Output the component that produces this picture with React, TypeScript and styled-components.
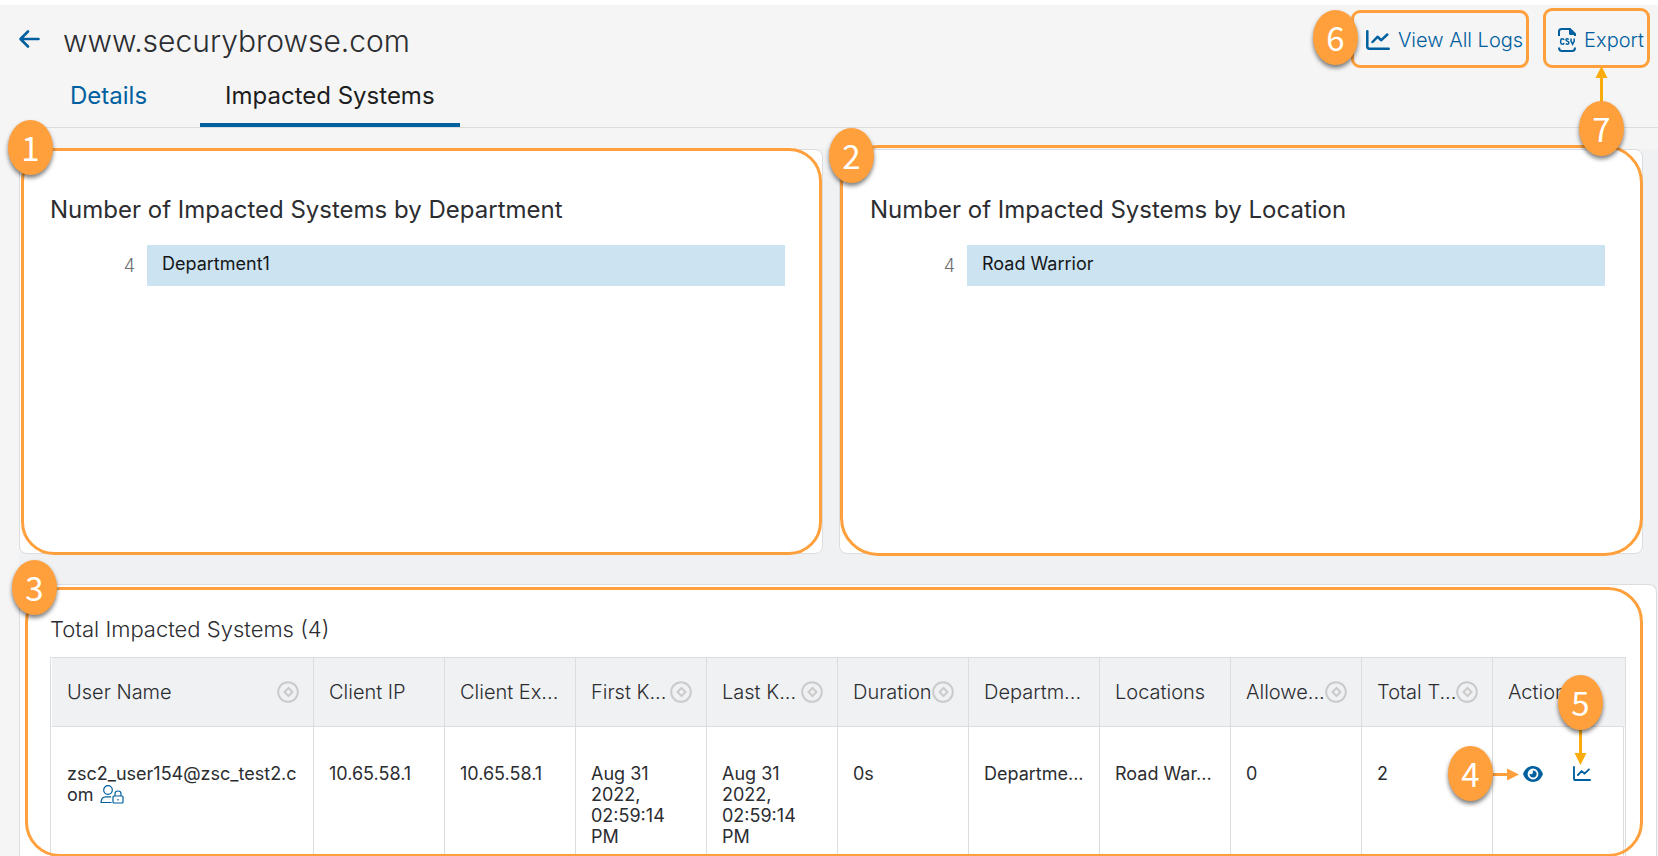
import React from "react";
import styled, { createGlobalStyle } from "styled-components";

const blue = "#00609f";
const orange = "#ffa03c";
const amber = "#fbac0a";
const line = "#dcdddf";
const panel = "#f0f1f3";

const GlobalStyle = createGlobalStyle`
  *, *::before, *::after { box-sizing: border-box; }
  body {
    margin: 0;
    background: #f5f5f5;
    color: #2b2d31;
    font-family: Inter, "Liberation Sans", sans-serif;
    font-weight: 400;
  }
  button { font: inherit; background: none; border: 0; padding: 0; cursor: pointer; }
  h1, h2 { margin: 0; font-weight: 400; }
`;

const Page = styled.div`
  border-top: 5px solid #fff;
  overflow: hidden;
`;

const TopBar = styled.header`
  display: flex;
  justify-content: space-between;
  height: 68px;
  padding: 0 8px 0 18px;
`;

const TitleGroup = styled.div`
  display: flex;
  align-items: center;
  gap: 21px;
`;

const Title = styled.h1`
  font-size: 30px;
  line-height: 36px;
  padding-top: 3px;
  && { font-weight: 300; }
`;

const BackButton = styled.button`
  display: flex;
  color: ${blue};
`;

const Actions = styled.div`
  display: flex;
  align-items: flex-end;
  gap: 14px;
  padding-bottom: 5px;
`;

const ActionFrame = styled.div<{ $h: number }>`
  position: relative;
  display: flex;
  align-items: flex-end;
  height: ${(p) => p.$h}px;
  padding: 0 3px 13px 12px;
  border: 3px solid ${orange};
  border-radius: 9px;
`;

const ActionButton = styled.button`
  display: flex;
  align-items: center;
  gap: 8px;
  color: ${blue};
  font-size: 20px;
  font-weight: 300;
  line-height: 24px;
  white-space: nowrap;
`;

const Tabs = styled.nav`
  display: flex;
  gap: 28px;
  height: 55px;
  margin-left: 20px;
  padding-left: 25px;
  border-bottom: 1px solid ${line};
`;

const Tab = styled.a<{ $active?: boolean }>`
  padding: 9px 25px 0;
  border-bottom: 4px solid ${(p) => (p.$active ? blue : "transparent")};
  color: ${(p) => (p.$active ? "#1c1d20" : blue)};
  font-size: 24px;
  line-height: 28px;
  text-decoration: none;
`;

const Content = styled.main`
  margin: 21px 0 0 19px;
  background: ${panel};
`;

const Cards = styled.div`
  display: grid;
  grid-template-columns: 1fr 1fr;
  gap: 16px;
  padding-right: 15px;
`;

const Card = styled.section`
  position: relative;
  min-height: 405px;
  padding: 46px 37px 30px 30px;
  background: #fff;
  border: 1px solid ${line};
  border-radius: 8px;
`;

const CardTitle = styled.h2`
  font-size: 24px;
  line-height: 28px;
  white-space: nowrap;
`;

const BarRow = styled.div`
  display: grid;
  grid-template-columns: 85px 1fr;
  gap: 12px;
  margin-top: 21px;
  font-size: 18px;
  line-height: 22px;
`;

const BarCount = styled.span`
  padding-top: 10px;
  color: #6c6e72;
  font-weight: 300;
  text-align: right;
`;

const Bar = styled.div`
  height: 41px;
  padding: 8px 15px;
  background: #cce3f1;
  color: #151618;
`;

const TableCard = styled.section`
  position: relative;
  margin: 30px 1px 0 0;
  padding: 30px 30px 0;
  background: #fff;
  border: 1px solid ${line};
  border-bottom: 0;
  border-radius: 8px 8px 0 0;
`;

const TableTitle = styled.h2`
  font-size: 22px;
  line-height: 28px;
  && { font-weight: 300; }
`;

const TableFrame = styled.div`
  margin-top: 14px;
  padding: 0 1px;
  border: 1px solid ${line};
  border-bottom: 0;
`;

const Table = styled.table`
  width: 100%;
  table-layout: fixed;
  border-collapse: separate;
  border-spacing: 0;
`;

const WideCol = styled.col`
  width: 16.6667%;
`;

const HeadCell = styled.th`
  height: 69px;
  padding: 0 14px 0 15px;
  background: ${panel};
  border-right: 1px solid ${line};
  border-bottom: 1px solid ${line};
  font-size: 20px;
  font-weight: 300;
  line-height: 24px;
  text-align: left;
  white-space: nowrap;
  &:last-child {
    border-right-color: ${panel};
    box-shadow: 1px 0 0 ${panel};
  }
`;

const HeadInner = styled.div`
  display: flex;
  align-items: center;
  justify-content: space-between;
`;

const SortButton = styled.button`
  display: flex;
  flex: none;
  color: #cbcbcc;
`;

const Cell = styled.td`
  height: 130px;
  padding: 36px 14px 10px 15px;
  border-right: 1px solid ${line};
  font-size: 18px;
  line-height: 21px;
  vertical-align: top;
`;

const UserCell = styled(Cell)`
  word-break: break-all;
  svg { vertical-align: -3px; margin: -4px 0 0 1px; }
`;

const RowActions = styled.div`
  display: flex;
  align-items: center;
  justify-content: space-between;
  height: 21px;
  padding: 0 18px 0 15px;
  color: ${blue};
  button { display: flex; color: inherit; }
`;

const Outline = styled.div<{ $inset: string; $radius: number }>`
  position: absolute;
  inset: ${(p) => p.$inset};
  border: 3px solid ${orange};
  border-radius: ${(p) => p.$radius}px;
  pointer-events: none;
`;

const Badge = styled.span<{ $top: number; $left?: number; $right?: number }>`
  position: absolute;
  z-index: 2;
  top: ${(p) => p.$top}px;
  ${(p) => (p.$left !== undefined ? `left: ${p.$left}px;` : `right: ${p.$right}px;`)}
  display: flex;
  align-items: center;
  justify-content: center;
  width: 45px;
  height: 55px;
  padding-bottom: 2px;
  border-radius: 50%;
  background: ${orange};
  box-shadow: 0 3px 4px rgba(0, 0, 0, 0.5);
  color: #fff;
  font-family: "Noto Sans CJK SC", sans-serif;
  font-size: 33px;
  font-weight: 400;
  line-height: 48px;
`;

const Arrow = styled.svg<{ $top: number; $right: number }>`
  position: absolute;
  z-index: 1;
  top: ${(p) => p.$top}px;
  right: ${(p) => p.$right}px;
`;

const BackIcon = () => (
  <svg width="24" height="20" viewBox="0 0 24 20" fill="none" stroke="currentColor" strokeWidth="2.600" strokeLinecap="round" strokeLinejoin="round">
    <path d="M10 2.5 2.5 10l7.500 7.500M3 10h17.500" />
  </svg>
);

const ChartIcon = ({ w, h }: { w: number; h: number }) => (
  <svg width={w} height={h} viewBox="0 0 24 20" fill="none" stroke="currentColor" strokeWidth="2.500" strokeLinecap="round" strokeLinejoin="round">
    <path d="M1.300 1.300V16.500q0 2.200 2.200 2.200h19.200" />
    <path d="M6.500 12l5-5.200 3.800 3.400 6-5.700" />
  </svg>
);

const CsvIcon = () => (
  <svg width="18" height="24" viewBox="0 0 18 24" fill="none" stroke="currentColor" strokeWidth="2">
    <path d="M1 8V3.500Q1 1 3.500 1H12l5 5v2" />
    <path d="M11 0v5.500q0 1.500 1.500 1.500H18z" fill="currentColor" stroke="none" />
    <path d="M1 19.500q0 3.500 3 3.500h10q3 0 3-3.500" />
    <path d="M6 12q-.3-1.300-1.700-1.300-1.600 0-1.600 1.700v2.200q0 1.700 1.600 1.700Q5.700 16.300 6 15M10.800 11.300q-2.600-1.300-2.800.5 0 1 1.400 1.500 1.600.5 1.500 1.600-.2 2-3.200.9M13 10.500v2.500l1.600 3.300 1.600-3.300v-2.500" strokeWidth="1.500" />
  </svg>
);

const SortIcon = () => (
  <svg width="22" height="22" viewBox="0 0 22 22" fill="none" stroke="currentColor" strokeWidth="2">
    <circle cx="11" cy="11" r="9.800" />
    <path d="M11.500 7 15.500 11l-4 4-4-4z" />
  </svg>
);

const UserLockIcon = () => (
  <svg width="24" height="19" viewBox="0 0 24 19" fill="none" stroke={blue} strokeWidth="1.200">
    <circle cx="8" cy="5" r="4.300" />
    <path d="M11.500 17.500H1Q1.200 11.800 6 11.800h5" />
    <rect x="13" y="11" width="10" height="7" rx="1" />
    <path d="M15 11V8.500q0-2.500 3-2.500t3 2.500V11M18 14v1.500" />
  </svg>
);

const EyeIcon = () => (
  <svg width="20" height="16" viewBox="0 0 20 16">
    <path fill="currentColor" fillRule="evenodd" d="M10 0C5 0 1.500 3.600 0 8c1.500 4.400 5 8 10 8s8.500-3.600 10-8c-1.500-4.400-5-8-10-8zm0 2.600a5.400 5.400 0 1 1 0 10.800 5.400 5.400 0 0 1 0-10.800z" />
    <path fill="currentColor" d="M10 4.400a3.600 3.600 0 1 1-3.500 3.100 2 2 0 0 0 3-2.700z" />
  </svg>
);

const columns = [
  { label: "User Name", sort: true },
  { label: "Client IP" },
  { label: "Client Ex..." },
  { label: "First K...", sort: true },
  { label: "Last K...", sort: true },
  { label: "Duration", sort: true },
  { label: "Departm..." },
  { label: "Locations" },
  { label: "Allowe...", sort: true },
  { label: "Total T...", sort: true },
  { label: "Action" },
];

export default function App() {
  return (
    <Page>
      <GlobalStyle />
      <TopBar>
        <TitleGroup>
          <BackButton aria-label="Back"><BackIcon /></BackButton>
          <Title>www.securybrowse.com</Title>
        </TitleGroup>
        <Actions>
          <ActionFrame $h={58}>
            <ActionButton><ChartIcon w={24} h={20} />View All Logs</ActionButton>
            <Badge $top={-3} $left={-41}>6</Badge>
          </ActionFrame>
          <ActionFrame $h={60}>
            <ActionButton><CsvIcon />Export</ActionButton>
            <Arrow $top={55} $right={39} width="13" height="38" viewBox="0 0 13 38">
              <path d="M6.500 0 12.500 12H8v26H5V12H.5z" fill={amber} />
            </Arrow>
            <Badge $top={90} $right={23}>7</Badge>
          </ActionFrame>
        </Actions>
      </TopBar>
      <Tabs>
        <Tab href="#details">Details</Tab>
        <Tab href="#impacted" $active aria-current="page">Impacted Systems</Tab>
      </Tabs>
      <Content>
        <Cards>
          <Card>
            <CardTitle>Number of Impacted Systems by Department</CardTitle>
            <BarRow><BarCount>4</BarCount><Bar>Department1</Bar></BarRow>
            <Outline $inset="-2px 0 -2px 1px" $radius={33} />
            <Badge $top={-30} $left={-12}>1</Badge>
          </Card>
          <Card>
            <CardTitle>Number of Impacted Systems by Location</CardTitle>
            <BarRow><BarCount>4</BarCount><Bar>Road Warrior</Bar></BarRow>
            <Outline $inset="-5px -1px -3px 0" $radius={38} />
            <Badge $top={-22} $left={-11}>2</Badge>
          </Card>
        </Cards>
        <TableCard>
          <TableTitle>Total Impacted Systems (4)</TableTitle>
          <TableFrame>
            <Table>
              <colgroup>
                <WideCol />
                {columns.slice(1).map((c) => <col key={c.label} />)}
              </colgroup>
              <thead>
                <tr>
                  {columns.map((c) => (
                    <HeadCell key={c.label} scope="col">
                      <HeadInner>
                        {c.label}
                        {c.sort && <SortButton aria-label={`Sort by ${c.label}`}><SortIcon /></SortButton>}
                      </HeadInner>
                    </HeadCell>
                  ))}
                </tr>
              </thead>
              <tbody>
                <tr>
                  <UserCell>zsc2_user154@zsc_test2.com <UserLockIcon /></UserCell>
                  <Cell>10.65.58.1</Cell>
                  <Cell>10.65.58.1</Cell>
                  <Cell>Aug 31 2022, 02:59:14 PM</Cell>
                  <Cell>Aug 31 2022, 02:59:14 PM</Cell>
                  <Cell>0s</Cell>
                  <Cell>Departme...</Cell>
                  <Cell>Road War...</Cell>
                  <Cell>0</Cell>
                  <Cell>2</Cell>
                  <Cell>
                    <RowActions>
                      <button aria-label="View details"><EyeIcon /></button>
                      <button aria-label="View logs"><ChartIcon w={18} h={15} /></button>
                    </RowActions>
                  </Cell>
                </tr>
              </tbody>
            </Table>
          </TableFrame>
          <Outline $inset="2px 13px 0 5px" $radius={35} />
          <Badge $top={-25} $left={-8}>3</Badge>
          <Badge $top={161} $right={163}>4</Badge>
          <Arrow $top={183} $right={137} width="27" height="13" viewBox="0 0 27 13">
            <path d="M0 5h15V.5l12 6-12 6V8H0z" fill={orange} />
          </Arrow>
          <Badge $top={90} $right={53}>5</Badge>
          <Arrow $top={144} $right={69} width="13" height="36" viewBox="0 0 13 36">
            <path d="M5 0h3v24h4.500l-6 12-6-12H5z" fill={amber} />
          </Arrow>
        </TableCard>
      </Content>
    </Page>
  );
}
